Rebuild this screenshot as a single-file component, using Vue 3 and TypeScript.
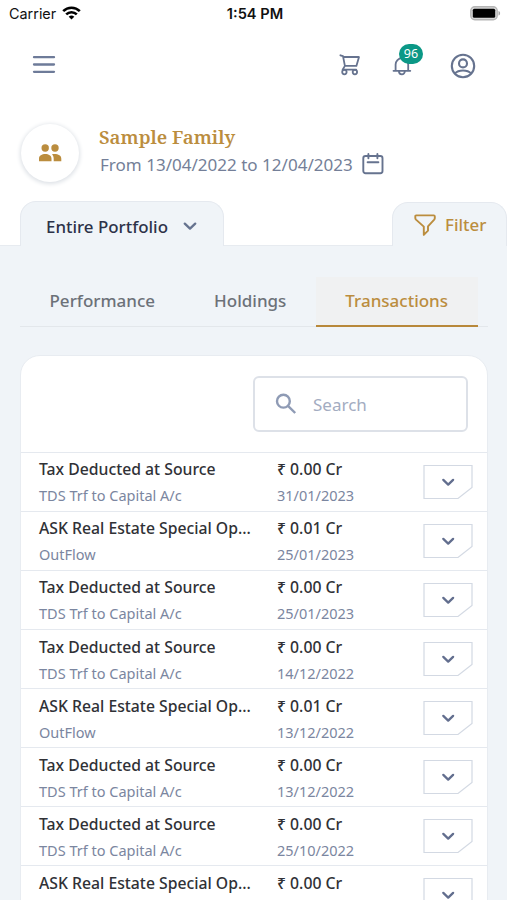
<script setup lang="ts">
import { ref } from 'vue'

interface Transaction {
  name: string
  amount: string
  kind?: string
  date?: string
}

const tabs: string[] = ['Performance', 'Holdings', 'Transactions']
const activeTab = ref('Transactions')
const search = ref('')

const tax = 'Tax Deducted at Source'
const ask = 'ASK Real Estate Special Op...'
const tds = 'TDS Trf to Capital A/c'

const transactions: Transaction[] = [
  { name: tax, kind: tds, amount: '0.00', date: '31/01/2023' },
  { name: ask, kind: 'OutFlow', amount: '0.01', date: '25/01/2023' },
  { name: tax, kind: tds, amount: '0.00', date: '25/01/2023' },
  { name: tax, kind: tds, amount: '0.00', date: '14/12/2022' },
  { name: ask, kind: 'OutFlow', amount: '0.01', date: '13/12/2022' },
  { name: tax, kind: tds, amount: '0.00', date: '13/12/2022' },
  { name: tax, kind: tds, amount: '0.00', date: '25/10/2022' },
  { name: ask, amount: '0.00' },
]
</script>

<template>
  <div class="screen">
    <div class="status">
      <div class="carrier">
        <span>Carrier</span>
        <svg width="19" height="14" viewBox="0 0 19 14" fill="none" stroke="#000" stroke-width="2.6">
          <path d="M1.2 5.2a11.8 11.8 0 0 1 16.6 0" />
          <path d="M4.2 8.4a7.6 7.6 0 0 1 10.6 0" />
          <path d="M9.5 13.6 6.7 10.8a4 4 0 0 1 5.6 0z" fill="#000" stroke="none" />
        </svg>
      </div>
      <strong class="time">1:54 PM</strong>
      <svg class="battery" width="31" height="15" viewBox="0 0 31 15">
        <rect x=".8" y=".8" width="26.400" height="13" rx="4" fill="#d8d8d8" stroke="#b5b5b5" stroke-width="1.400" />
        <rect x="2.800" y="2.800" width="22.400" height="9" rx="1.500" fill="#000" />
        <path d="M28.500 5v4.600c2.200-.7 2.200-3.900 0-4.600z" fill="#a5a5a5" />
      </svg>
    </div>

    <header class="toolbar">
      <button class="icon menu" aria-label="Menu">
        <svg width="24" height="20" viewBox="0 0 24 20" stroke="#6e7b99" stroke-width="2.300" stroke-linecap="round">
          <path d="M2 2.200h20M2 9.500h20M2 16.800h20" />
        </svg>
      </button>
      <div class="actions">
        <button class="icon" aria-label="Cart">
          <svg width="22" height="22" viewBox="0 0 22 22" fill="none" stroke="#66738f" stroke-width="1.800" stroke-linecap="round" stroke-linejoin="round">
            <path d="M1.400 1.300 4 2.200l1.900 9.700h11.500l2.600-8.900H4.200M5.900 11.900l-2.300 3.800h13.600" />
            <circle cx="5.400" cy="18.100" r="2.200" />
            <circle cx="15.900" cy="18.100" r="2.200" />
          </svg>
        </button>
        <button class="icon bell" aria-label="Notifications">
          <svg width="20" height="22" viewBox="0 0 20 22" fill="none" stroke="#66738f" stroke-width="1.800" stroke-linecap="round" stroke-linejoin="round">
            <path d="M1.500 16.800h16.800M3.600 16.600V10.500a6.300 6.300 0 0 1 12.600 0v6.100M6.900 17a3 3.300 0 0 0 6 0M9.900 2v2" />
          </svg>
          <span class="badge">96</span>
        </button>
        <button class="icon account" aria-label="Account">
          <svg width="26" height="26" viewBox="0 0 26 26" fill="none" stroke="#66738f" stroke-width="2.100">
            <circle cx="13" cy="13" r="11.200" />
            <circle cx="13" cy="10.400" r="4" />
            <path d="M4.700 20.700c4-4.200 12.600-4.200 16.600 0" />
          </svg>
        </button>
      </div>
    </header>

    <section class="family">
      <div class="avatar">
        <svg width="24" height="20" viewBox="0 0 24 20" fill="#bb8d3e">
          <circle cx="7.200" cy="5" r="3.700" />
          <circle cx="17" cy="5" r="3.700" />
          <path d="M1 18.300v-2.600c0-3.200 3-4.700 6.300-4.700s6.200 1.500 6.200 4.700v2.600zM14 11.200c5-.7 9.300.6 9.300 4.500v2.600h-7.600v-2.600c0-1.800-.6-3.400-1.700-4.500z" />
        </svg>
      </div>
      <div class="who">
        <h1>Sample Family</h1>
        <div class="range">
          <span>From 13/04/2022 to 12/04/2023</span>
          <svg width="22" height="22" viewBox="0 0 22 22" fill="none" stroke="#66738f" stroke-width="1.900" stroke-linecap="round">
            <rect x="1.300" y="3" width="19.200" height="17.300" rx="2.200" />
            <path d="M6.400 1v4.200M15.400 1v4.200M5.600 9.200h10.800" />
          </svg>
        </div>
      </div>
    </section>

    <div class="folders">
      <button class="folder portfolio">
        <span>Entire Portfolio</span>
        <svg width="14" height="9" viewBox="0 0 14 9" fill="none" stroke="#66738f" stroke-width="2.300" stroke-linecap="round" stroke-linejoin="round">
          <path d="m1.800 1.600 5.200 5 5.200-5" />
        </svg>
      </button>
      <button class="folder filter">
        <svg width="22" height="22" viewBox="0 0 22 22" fill="none" stroke="#bb8d3e" stroke-width="1.900" stroke-linejoin="round">
          <path d="M2.200 1.400h17.600q1 0 1 1v1.500q0 1-.6 1.700l-6.200 6.800v4.300l-4.200 4.200v-8.300L2 5.600q-.7-.7-.7-1.700V2.400q0-1 .9-1z" />
        </svg>
        <span>Filter</span>
      </button>
    </div>

    <main class="content">
      <nav class="tabs">
        <button
          v-for="tab in tabs"
          :key="tab"
          class="tab"
          :class="{ active: tab === activeTab }"
          @click="activeTab = tab"
        ><span>{{ tab }}</span></button>
      </nav>

      <section class="card">
        <div class="search-row">
          <label class="search">
            <svg width="22" height="22" viewBox="0 0 22 22" fill="none" stroke="#8f9bb5" stroke-width="2.400">
              <circle cx="8.400" cy="8.200" r="6.400" />
              <path d="m13 12.800 7.200 7.200" />
            </svg>
            <input v-model="search" type="text" placeholder="Search" />
          </label>
        </div>
        <article v-for="(t, i) in transactions" :key="i" class="row">
          <div class="cell name">
            <span class="main">{{ t.name }}</span>
            <span v-if="t.kind" class="sub">{{ t.kind }}</span>
          </div>
          <div class="cell amount">
            <span class="main">₹ {{ t.amount }} Cr</span>
            <span v-if="t.date" class="sub">{{ t.date }}</span>
          </div>
          <button class="expand" aria-label="Expand">
            <svg width="50" height="36" viewBox="0 0 50 36" fill="none">
              <path d="M1 1.500h48v22L35 34.500H1z" fill="#fff" stroke="#d3d9e3" stroke-width="1.200" />
              <path d="m20.300 15.900 4.900 4.700 4.900-4.700" stroke="#626e8e" stroke-width="2.300" stroke-linecap="round" stroke-linejoin="round" />
            </svg>
          </button>
        </article>
      </section>
    </main>
  </div>
</template>

<style>
body {
  margin: 0;
  overflow: hidden;
}
</style>

<style scoped>
.screen {
  display: flex;
  flex-direction: column;
  width: 507px;
  height: 900px;
  overflow: hidden;
  background: #fff;
  font-family: 'Noto Sans', sans-serif;
  color: #303136;
}
.screen * {
  box-sizing: border-box;
}
.screen > * {
  flex: none;
}
button {
  padding: 0;
  border: 0;
  background: none;
  font: inherit;
  color: inherit;
}
svg {
  display: block;
  flex: none;
}
.status {
  display: grid;
  grid-template-columns: 1fr auto 1fr;
  align-items: center;
  height: 27px;
  padding: 0 6px 0 9px;
  font-family: Inter, sans-serif;
  font-size: 14.4px;
  color: #111;
}
.carrier {
  display: flex;
  align-items: center;
  gap: 6px;
}
.carrier svg {
  margin-top: -2px;
}
.time {
  font-size: 14.6px;
  font-weight: 600;
}
.battery {
  justify-self: end;
}
.toolbar {
  display: flex;
  justify-content: space-between;
  align-items: center;
  height: 76px;
  padding: 0 31px 1px 32px;
}
.actions {
  display: flex;
  align-items: center;
  gap: 31px;
}
.account {
  margin: 2px 0 0 7px;
}
.bell {
  position: relative;
}
.badge {
  position: absolute;
  left: 7px;
  top: -10px;
  width: 24px;
  height: 20px;
  border-radius: 10px;
  background: #0b9886;
  color: #fff;
  font-size: 12.5px;
  line-height: 20px;
  text-align: center;
}
.family {
  display: flex;
  align-items: center;
  gap: 20px;
  height: 98px;
  padding-left: 21px;
}
.avatar {
  display: grid;
  place-items: center;
  width: 58px;
  height: 58px;
  margin-top: 1px;
  border-radius: 50%;
  box-shadow: 0 1px 4px 1px #dde1e6;
}
.who {
  display: flex;
  flex-direction: column;
  margin-top: -2px;
}
h1 {
  margin: 0;
  font-family: 'Noto Serif', 'DejaVu Serif Condensed', 'DejaVu Serif', serif;
  font-size: 18.7px;
  font-weight: 600;
  line-height: 26px;
  color: #bb8d3e;
}
.range {
  display: flex;
  align-items: center;
  gap: 9px;
  height: 28px;
  padding-left: 1px;
  font-size: 17.05px;
  color: #747f98;
}
.folders {
  display: flex;
  justify-content: space-between;
  align-items: flex-end;
  height: 45px;
  padding-left: 20px;
  border-bottom: 1px solid #e7ebf0;
}
.folder {
  display: flex;
  align-items: center;
  margin-bottom: -1px;
  border: 1px solid #e5e9ef;
  border-bottom: 0;
  border-radius: 16px 16px 0 0;
  background: #f0f4f8;
  font-size: 16.9px;
  font-weight: 500;
}
.portfolio {
  gap: 15px;
  width: 204px;
  height: 45px;
  padding: 5px 0 0 25px;
  color: #2d3248;
}
.filter {
  gap: 9px;
  width: 115px;
  height: 44px;
  padding: 0 0 1px 21px;
  color: #bb8d3e;
}
.filter svg {
  margin-top: 2px;
}
.content {
  height: 654px;
  padding: 31px 19px 0 20px;
  background: #f0f4f8;
}
.tabs {
  display: flex;
  height: 50px;
  border-bottom: 1px solid #e3e7eb;
}
.tab {
  height: 50px;
  padding: 0 29.5px 1px;
  border-bottom: 2px solid transparent;
  font-size: 17px;
  font-weight: 500;
  color: #6c7178;
}
.tab.active {
  border-color: #b8883a;
  background: #f0f1f2;
  color: #bb8d3e;
}
.card {
  margin-top: 28px;
  height: 600px;
  border: 1px solid #e8ecf1;
  border-radius: 20px 20px 0 0;
  background: #fff;
}
.search-row {
  display: flex;
  justify-content: flex-end;
  height: 96px;
  padding: 20px 19px 0;
}
.search {
  display: flex;
  align-items: center;
  gap: 16px;
  width: 215px;
  height: 56px;
  padding-left: 20px;
  border: 2px solid #dde1e8;
  border-radius: 6px;
}
.search input {
  width: 120px;
  padding: 0;
  border: 0;
  outline: 0;
  background: none;
  font: inherit;
  font-size: 17px;
}
.search input::placeholder {
  color: #a3acc1;
}
.row {
  display: flex;
  height: 59.05px;
  padding-left: 18px;
  border-top: 1px solid #e5e9ef;
}
.cell {
  display: flex;
  flex-direction: column;
  padding-top: 3.4px;
  white-space: nowrap;
}
.name {
  width: 238px;
}
.amount {
  width: 146px;
}
.main {
  font-size: 15.75px;
  font-weight: 500;
  line-height: 26px;
}
.sub {
  font-size: 14.5px;
  line-height: 26px;
  color: #7b86a0;
}
.expand {
  align-self: center;
}
</style>
